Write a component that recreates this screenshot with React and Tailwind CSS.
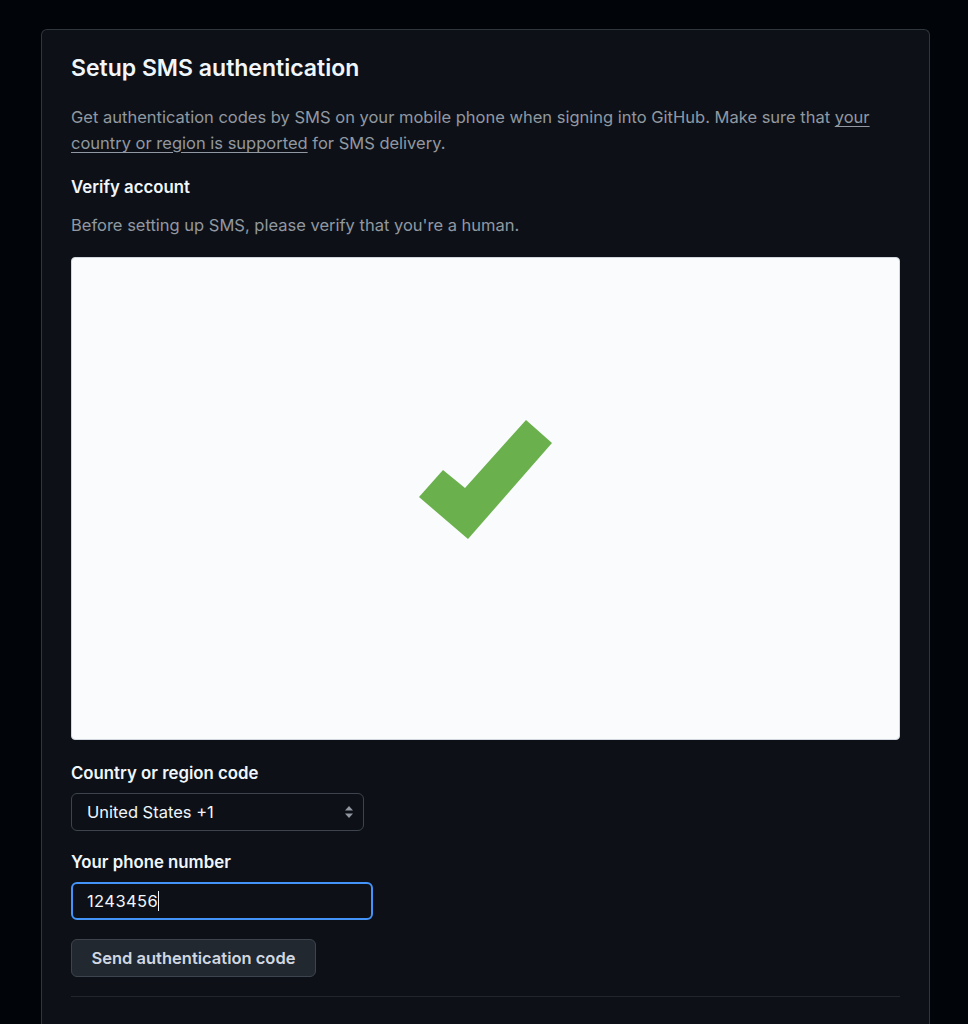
export default function App() {
  return (
    <div
      className="min-h-screen bg-[#010409] pl-[41px] pt-[29px]"
      style={{ fontFamily: 'Inter, "Liberation Sans", sans-serif' }}
    >
      <div className="h-[995px] w-[889px] rounded-t-[6px] border border-b-0 border-[#30363d] bg-[#0d1117] px-[29px] pt-[22px]">
        <h2 className="text-[23px] font-semibold leading-[32px] text-[#f0f6fc]">
          Setup SMS authentication
        </h2>

        <p className="mt-[20px] text-[16.5px] leading-[26px] text-[#9198a1]">
          Get authentication codes by SMS on your mobile phone when signing into GitHub. Make sure that{' '}
          <a href="#" className="underline underline-offset-[3px]">
            your country or region is supported
          </a>{' '}
          for SMS delivery.
        </p>

        <h3 className="mt-[19px] text-[16.8px] font-semibold leading-[24px] text-[#f0f6fc]">Verify account</h3>
        <p className="mt-[14px] text-[16.5px] leading-[24px] text-[#9198a1]">
          Before setting up SMS, please verify that you're a human.
        </p>

        <div className="mt-[20px] flex h-[483px] items-center justify-center rounded-[4px] border border-[#d0d7de] bg-[#f9fbfc] pb-[38px]">
          <svg width="134" height="120" viewBox="419 421 134 120">
            <polygon points="419,498 443,471 465,489 526,421 552,444 468,540" fill="#6ab04c" />
          </svg>
        </div>

        <label className="mt-[21px] block text-[16.8px] font-semibold leading-[24px] text-[#f0f6fc]">
          Country or region code
        </label>
        <div className="mt-[8px] flex h-[38px] w-[293px] items-center justify-between rounded-[6px] border border-[#3d444d] bg-[#0d1117] pl-[15px] pr-[9px]">
          <span className="text-[16.5px] text-[#f0f6fc]">United States +1</span>
          <svg width="10" height="14" viewBox="0 0 10 14" fill="#9198a1">
            <path d="M5 1 L9 5.5 H1 Z" />
            <path d="M5 13 L9 8.5 H1 Z" />
          </svg>
        </div>

        <label className="mt-[19px] block text-[16.8px] font-semibold leading-[24px] text-[#f0f6fc]">
          Your phone number
        </label>
        <div className="mt-[8px] flex h-[38px] w-[302px] items-center rounded-[6px] border-2 border-[#4493f8] bg-[#0d1117] pl-[14px]">
          <span className="text-[16.5px] tracking-[0.4px] text-[#f0f6fc]">1243456</span>
          <span className="h-[20px] w-[1px] bg-[#f0f6fc]" />
        </div>

        <button className="mt-[19px] flex h-[38px] w-[245px] items-center justify-center rounded-[6px] border border-[#3d444d] bg-[#212830] text-[16.5px] font-semibold text-[#d1d7e0]">
          Send authentication code
        </button>

        <div className="mt-[19px] h-px bg-[#21262d]" />
      </div>
    </div>
  );
}
